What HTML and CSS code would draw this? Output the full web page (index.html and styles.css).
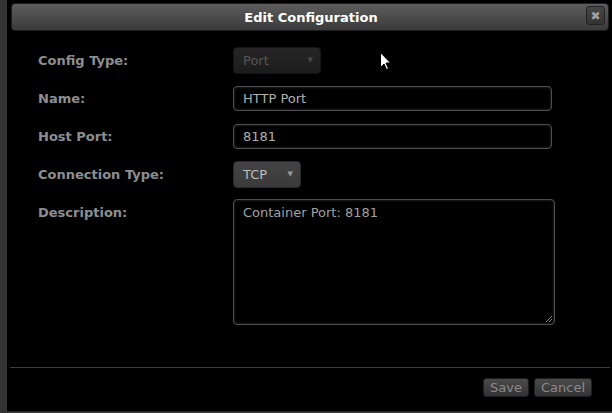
FILE: index.html
```html
<!DOCTYPE html>
<html>
<head>
<meta charset="utf-8">
<link rel="stylesheet" href="styles.css">
</head>
<body>
<div class="dialog">
  <div class="titlebar">
    <span class="title">Edit Configuration</span>
    <span class="close">&#x2716;</span>
  </div>
  <div class="form">
    <div class="label">Config Type:</div>
    <div class="field"><div class="select disabled"><span>Port</span><span class="arrow">&#9660;</span></div></div>
    <div class="label">Name:</div>
    <div class="field"><div class="input">HTTP Port</div></div>
    <div class="label">Host Port:</div>
    <div class="field"><div class="input">8181</div></div>
    <div class="label">Connection Type:</div>
    <div class="field"><div class="select tcp"><span>TCP</span><span class="arrow">&#9660;</span></div></div>
    <div class="label top">Description:</div>
    <div class="field top"><div class="textarea">Container Port: 8181<svg class="grip" width="9" height="9" viewBox="0 0 9 9"><path d="M8 2L2 8M8 5L5 8" stroke="#888" stroke-width="1"/></svg></div></div>
  </div>
  <div class="footer">
    <span class="btn">Save</span>
    <span class="btn">Cancel</span>
  </div>
  <svg class="cursor" width="12" height="19" viewBox="0 0 12 19"><path d="M0.5 0.5V15.5L4 12L6.5 17.5L8.5 16.5L6 11H10.5Z" fill="#fff" stroke="#000" stroke-width="1"/></svg>
</div>
</body>
</html>
```
FILE: styles.css
```css
html, body {
  margin: 0;
  padding: 0;
  background: #333;
  height: 413px;
  overflow: hidden;
}
body {
  font-family: "DejaVu Sans", Verdana, sans-serif;
}
.dialog {
  position: relative;
  margin-left: 7px;
  height: 412px;
  background: #000;
  border-bottom: 1px solid #2a2a2a;
  box-sizing: border-box;
  padding-top: 3px;
  display: flex;
  flex-direction: column;
}
.titlebar {
  margin: 0 3px 0 4px;
  height: 28px;
  box-sizing: border-box;
  border: 1px solid #1e1e1e;
  border-radius: 4px;
  background: linear-gradient(#5d5d5d, #3a3a3a);
  display: flex;
  align-items: center;
  justify-content: center;
  position: relative;
}
.title {
  color: #fff;
  font-weight: bold;
  font-size: 13px;
  padding-left: 2px;
}
.close {
  position: absolute;
  right: 3px;
  top: 2px;
  width: 19px;
  height: 19px;
  box-sizing: border-box;
  border: 1px solid #232323;
  border-radius: 3px;
  background: linear-gradient(#474747, #333);
  color: #a0a0a0;
  font-size: 12px;
  font-weight: bold;
  display: flex;
  align-items: center;
  justify-content: center;
}
.form {
  display: grid;
  grid-template-columns: 195px 322px;
  grid-auto-rows: 38px;
  padding: 10px 0 0 31px;
  align-items: center;
}
.label {
  color: #8c8e92;
  font-weight: bold;
  font-size: 13px;
}
.label.top, .field.top {
  align-self: start;
}
.label.top {
  padding-top: 12px;
}
.field.top {
  padding-top: 6px;
}
.select {
  display: inline-flex;
  justify-content: space-between;
  align-items: center;
  height: 27px;
  box-sizing: border-box;
  border-radius: 4px;
  padding: 0 7px 0 9px;
  font-size: 13px;
}
.select.disabled {
  width: 88px;
  background: linear-gradient(#262626, #1c1c1c);
  border: 1px solid #161616;
  color: #555;
}
.select.tcp {
  width: 68px;
  background: linear-gradient(#444, #3a3a3a);
  border: 1px solid #2a2a2a;
  color: #bdbdbd;
}
.arrow {
  font-size: 7px;
  color: #999;
}
.select.disabled .arrow {
  color: #4a4a4a;
}
.input {
  width: 319px;
  height: 25px;
  box-sizing: border-box;
  border: 1px solid #4e4e4e;
  border-radius: 4px;
  box-shadow: inset 0 0 3px #333;
  color: #b0b0b0;
  font-size: 13px;
  padding: 0 9px;
  display: flex;
  align-items: center;
}
.textarea {
  position: relative;
  width: 322px;
  height: 126px;
  box-sizing: border-box;
  border: 1px solid #4e4e4e;
  border-radius: 4px;
  box-shadow: inset 0 0 3px #333;
  color: #a0a0a0;
  font-size: 13px;
  padding: 5px 9px;
}
.grip {
  position: absolute;
  right: 1px;
  bottom: 1px;
}
.footer {
  margin-top: auto;
  margin-left: 3px;
  margin-right: 2px;
  border-top: 1px solid #3c3c3c;
  height: 44px;
  box-sizing: border-box;
  display: flex;
  justify-content: flex-end;
  align-items: flex-start;
  gap: 5px;
  padding: 10px 18px 0 0;
}
.btn {
  height: 19px;
  box-sizing: border-box;
  border: 1px solid #1e1e1e;
  border-radius: 3px;
  background: linear-gradient(#4a4a4a, #333);
  color: #8a8a8a;
  font-size: 13px;
  padding: 0 6px;
  display: flex;
  align-items: center;
}
.cursor {
  position: absolute;
  left: 373px;
  top: 52px;
}
```
